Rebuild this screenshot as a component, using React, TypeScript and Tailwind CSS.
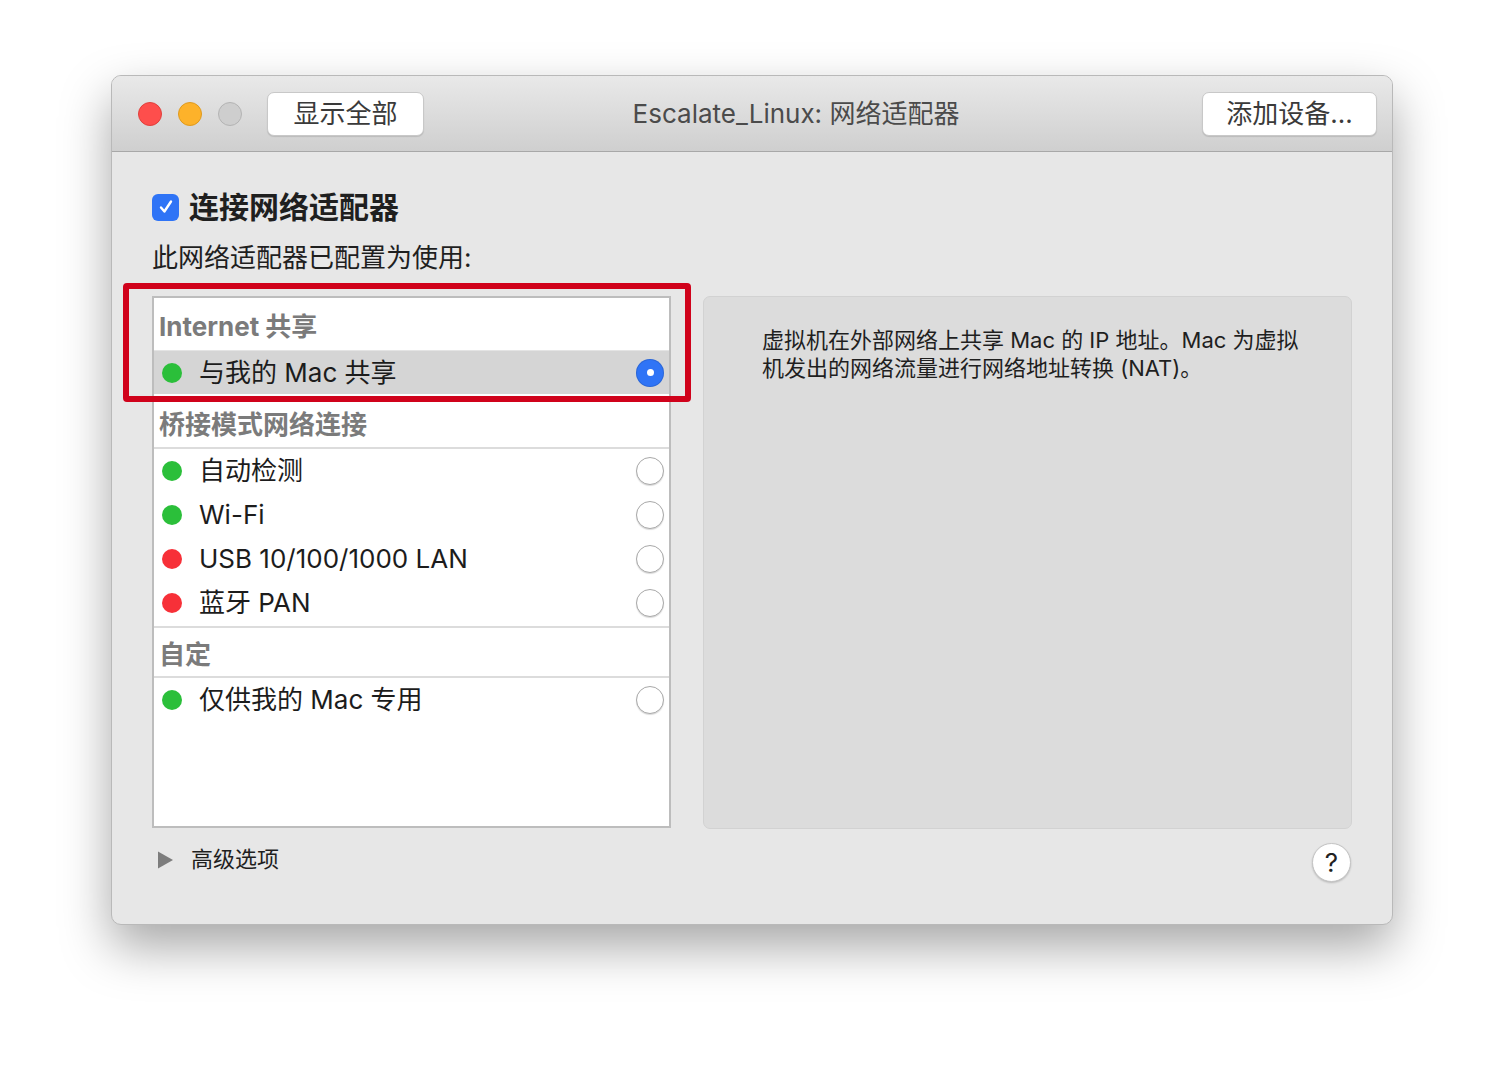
import React from "react"

const font = "font-['Inter','Noto_Sans_CJK_SC',sans-serif]"

type Row = { label: string; color: "green" | "red"; selected?: boolean }

const Dot = ({ color }: { color: "green" | "red" }) => (
  <span
    className={
      "inline-block size-[20px] rounded-full shrink-0 " +
      (color === "green" ? "bg-[#2bbf3a]" : "bg-[#f73038]")
    }
  />
)

const Radio = ({ on }: { on?: boolean }) =>
  on ? (
    <span className="flex items-center justify-center size-[28px] rounded-full bg-[#2f74f6] shadow-[inset_0_0_0_1px_rgba(0,0,0,0.12)]">
      <span className="size-[7px] rounded-full bg-white" />
    </span>
  ) : (
    <span className="size-[28px] rounded-full bg-white border border-[#a9a9a9] shadow-[0_1px_1px_rgba(0,0,0,0.15)]" />
  )

const ListRow = ({ label, color, selected }: Row) => (
  <div
    className={
      "flex items-center h-[44px] pl-[8px] pr-[5px] " +
      (selected ? "bg-[#d5d5d5] border-t border-[#e4e4e4]" : "")
    }
  >
    <Dot color={color} />
    <span className="ml-[17px] text-[26px] text-[#1c1c1c] flex-1 leading-none">{label}</span>
    <Radio on={selected} />
  </div>
)

const Header = ({ text, className }: { text: string; className?: string }) => (
  <div className={"flex items-end pl-[5px] text-[26px] font-bold text-[#7b7b7b] leading-none " + (className ?? "")}>
    {text}
  </div>
)

const Btn = ({ children, className }: { children: React.ReactNode; className?: string }) => (
  <div
    className={
      "flex items-center justify-center h-[44px] rounded-[7px] bg-white border border-[#c8c8c8] shadow-[0_1px_1px_rgba(0,0,0,0.12)] text-[26px] text-[#3a3a3a] " +
      (className ?? "")
    }
  >
    {children}
  </div>
)

export default function App() {
  return (
    <div className={"w-[1504px] h-[1072px] bg-white pl-[111px] pt-[75px] " + font}>
      <div className="w-[1282px] h-[850px] rounded-[10px] border border-[#b9b9b9] bg-[#e7e7e7] overflow-hidden shadow-[0_22px_50px_rgba(0,0,0,0.35)] flex flex-col">
        {/* title bar */}
        <div className="h-[76px] shrink-0 flex items-center bg-gradient-to-b from-[#e9e9e9] to-[#cfcfcf] border-b border-[#a8a8a8] pl-[26px] pr-[15px]">
          <div className="flex gap-[16px]">
            <span className="size-[24px] rounded-full bg-[#fe4e4c] border border-[#e0403c]" />
            <span className="size-[24px] rounded-full bg-[#fdb22a] border border-[#df9a1e]" />
            <span className="size-[24px] rounded-full bg-[#cecece] border border-[#b4b4b4]" />
          </div>
          <Btn className="ml-[25px] w-[157px]">显示全部</Btn>
          <div className="flex-1 text-center pr-[34px] text-[26px] text-[#4b4b4b]">Escalate_Linux: 网络适配器</div>
          <Btn className="w-[175px]">添加设备...</Btn>
        </div>

        {/* body */}
        <div className="flex-1 flex flex-col pl-[40px] pr-[40px] pt-[40px]">
          <div className="flex items-center h-[30px]">
            <span className="flex items-center justify-center size-[27px] rounded-[6px] bg-[#2f74f6]">
              <svg viewBox="0 0 20 20" className="size-[20px]" fill="none" stroke="white" strokeWidth="2.4" strokeLinecap="round" strokeLinejoin="round">
                <path d="M5 10.5l3.4 4L15 4.5" />
              </svg>
            </span>
            <span className="ml-[10px] text-[30px] font-bold text-[#1f1f1f]">连接网络适配器</span>
          </div>
          <div className="mt-[21px] text-[26px] text-[#1f1f1f] leading-[30px]">此网络适配器已配置为使用:</div>

          <div className="mt-[23px] flex gap-[32px]">
            <div className="relative w-[519px]">
              <div className="h-[532px] border-2 border-[#bdbdbd] bg-white flex flex-col">
                <Header text="Internet 共享" className="h-[42px]" />
                <div className="h-[10px]" />
                <ListRow label="与我的 Mac 共享" color="green" selected />
                <Header text="桥接模式网络连接" className="h-[55px] border-b-2 border-[#dcdcdc] pb-[9px]" />
                <ListRow label="自动检测" color="green" />
                <ListRow label="Wi-Fi" color="green" />
                <ListRow label="USB 10/100/1000 LAN" color="red" />
                <ListRow label="蓝牙 PAN" color="red" />
                <div className="border-t-2 border-[#dcdcdc] mt-[1px]" />
                <Header text="自定" className="h-[50px] border-b-2 border-[#dcdcdc] pb-[8px]" />
                <ListRow label="仅供我的 Mac 专用" color="green" />
              </div>
              {/* annotation */}
              <div className="absolute left-[-29px] top-[-13px] w-[568px] h-[119px] border-[6px] border-[#d0021b] rounded-[4px] pointer-events-none" />
            </div>

            <div className="w-[649px] h-[533px] rounded-[7px] bg-[#dcdcdc] border border-[#d2d2d2] pl-[58px] pr-[34px] pt-[29px] text-[22px] leading-[28px] text-[#1f1f1f]">
              虚拟机在外部网络上共享 Mac 的 IP 地址。Mac 为虚拟机发出的网络流量进行网络地址转换 (NAT)。
            </div>
          </div>

          <div className="flex items-center mt-[8px]">
            <div className="flex items-center pl-[6px]">
              <svg viewBox="0 0 16 18" className="w-[15px] h-[18px]">
                <path d="M0 0L16 9L0 18Z" fill="#7d7d7d" />
              </svg>
              <span className="ml-[18px] text-[22px] text-[#1f1f1f]">高级选项</span>
            </div>
            <div className="flex-1" />
            <span className="flex items-center justify-center size-[39px] rounded-full bg-white border border-[#c4c4c4] shadow-[0_1px_2px_rgba(0,0,0,0.2)] text-[26px] text-[#222] leading-none mr-[1px] mt-[6px]">
              ?
            </span>
          </div>
        </div>
      </div>
    </div>
  )
}
